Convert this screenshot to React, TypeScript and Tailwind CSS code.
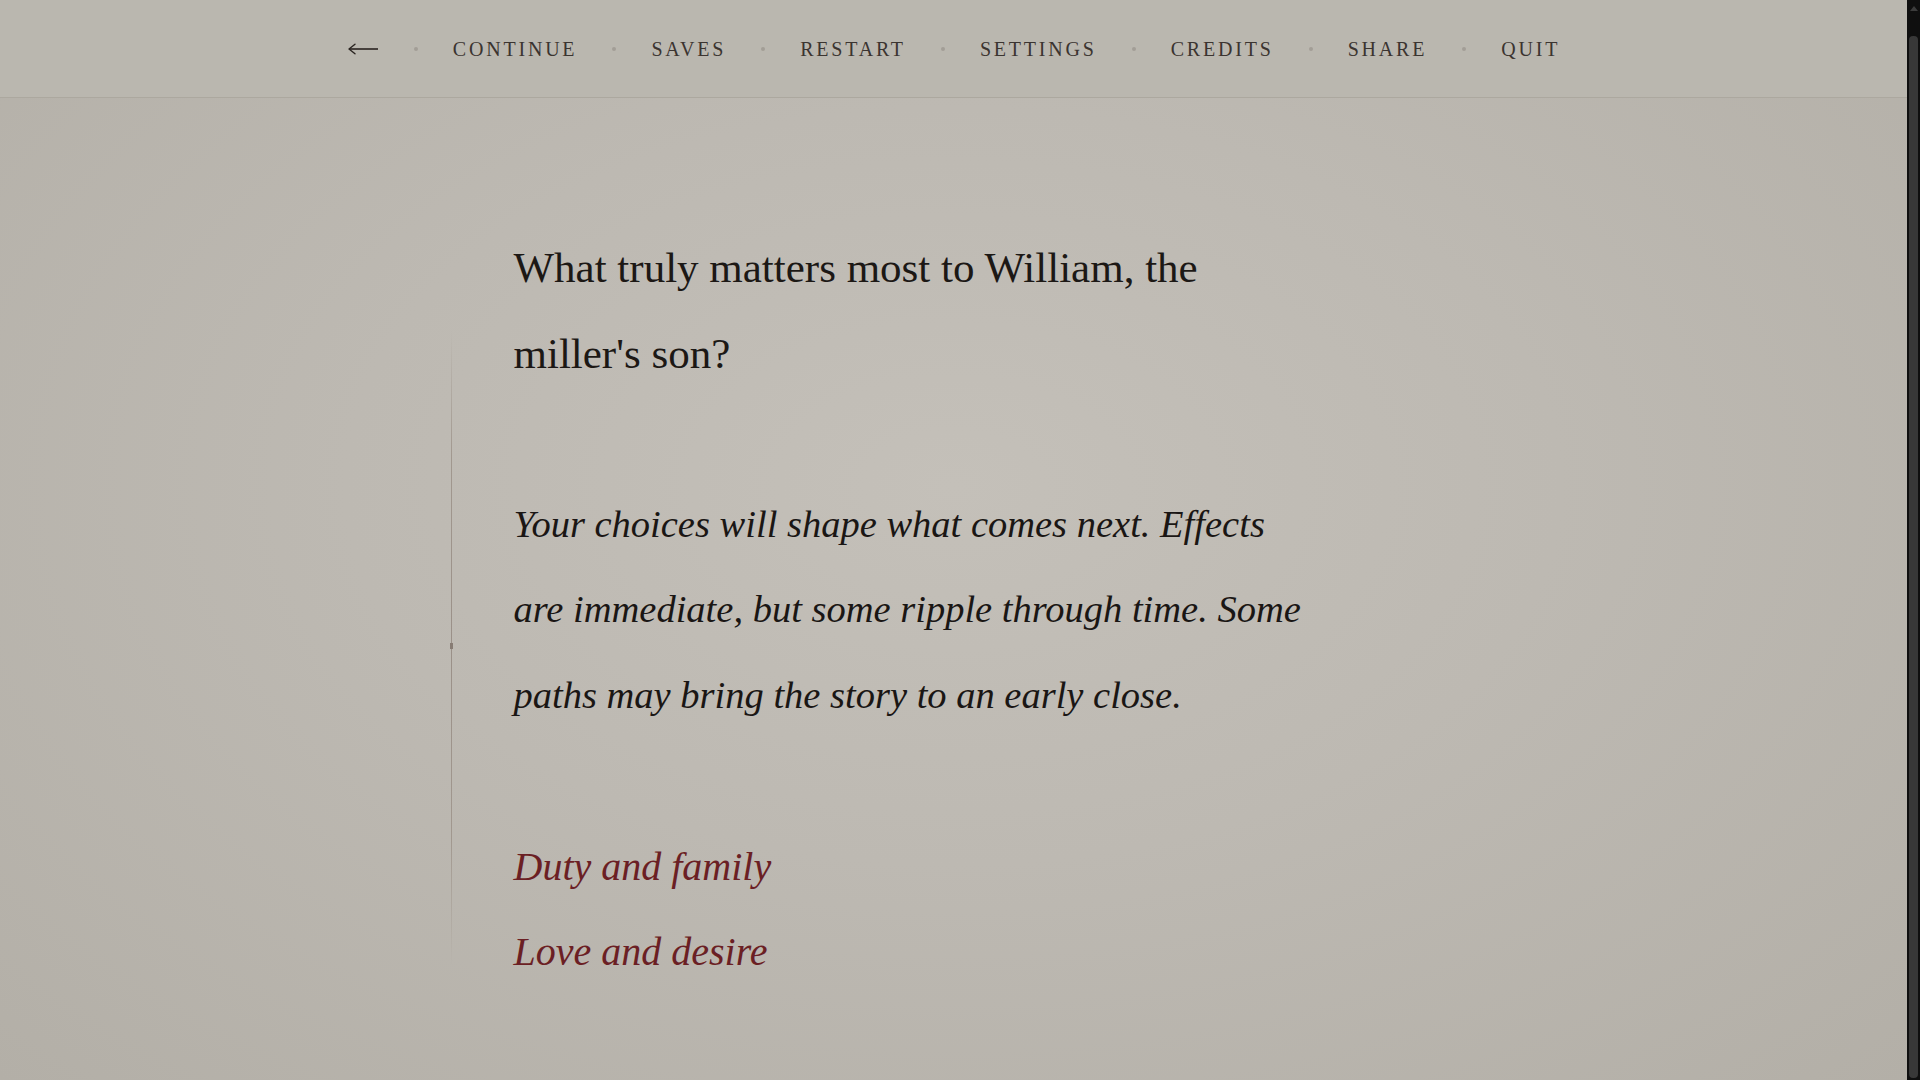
/* ──────────────────────────────────────────────────────────
   Story page — top menu, question, choices
   ────────────────────────────────────────────────────────── */

const MENU = ['Continue', 'Saves', 'Restart', 'Settings', 'Credits', 'Share', 'Quit'];

function Dot() {
  return <span className="block w-[4px] h-[4px] rounded-full bg-[#a29e96]" />;
}

function BackArrow() {
  return (
    <svg width="32" height="12" viewBox="0 0 32 12" fill="none" className="block">
      <path d="M31 6H2" stroke="#2a2420" strokeWidth="1.6" />
      <path d="M8 1.2L2 6l6 4.8" stroke="#2a2420" strokeWidth="1.4" strokeLinecap="round" strokeLinejoin="round" />
    </svg>
  );
}

function TopMenu() {
  return (
    <header className="h-[98px] shrink-0 border-b border-[#aca89f] bg-[#bab7af] flex items-center justify-center gap-[35px]">
      <button className="flex items-center h-6">
        <BackArrow />
      </button>
      {MENU.map((label) => (
        <div key={label} className="flex items-center gap-[35px]">
          <Dot />
          <button className="font-['Liberation_Serif',serif] text-[20px] uppercase tracking-[0.14em] text-[#3b3430] leading-none">
            {label}
          </button>
        </div>
      ))}
    </header>
  );
}

function Scrollbar() {
  return (
    <aside className="w-[13px] shrink-0 bg-[#0f0f0f] flex flex-col items-center">
      <div className="h-[36px] flex items-start pt-[6px]">
        <span className="block w-0 h-0 border-l-[4px] border-r-[4px] border-b-[5px] border-l-transparent border-r-transparent border-b-[#3c3c3c]" />
      </div>
      <div className="flex-1 w-[9px] rounded-[4px] bg-[#383838] mb-[2px]" />
    </aside>
  );
}

export default function App() {
  return (
    <div className="flex w-full h-[1080px] overflow-hidden">
      <main className="flex-1 flex flex-col bg-[radial-gradient(ellipse_at_50%_45%,#c4c0b9_0%,#bdb9b2_45%,#b3afa7_100%)]">
        <TopMenu />

        <section className="mx-auto w-[1006px] flex items-start pt-[127px]">
          {/* decorative rule */}
          <div className="relative mt-[105px] h-[637px] w-px bg-[linear-gradient(to_bottom,transparent,#a1988f_20%,#9a9088_50%,#a1988f_80%,transparent)]">
            <span className="absolute left-[-1px] top-[313px] w-[3px] h-[6px] bg-[#877c74]" />
          </div>

          <div className="ml-[62px] leading-[85.5px] whitespace-nowrap">
            <p className="font-['Liberation_Serif',serif] text-[43px] text-[#1c1815]">
              What truly matters most to William, the
              <br />
              miller's son?
            </p>

            <p className="mt-[85.5px] font-['Liberation_Serif',serif] italic text-[38.5px] text-[#1a1614]">
              Your choices will shape what comes next. Effects
              <br />
              are immediate, but some ripple through time. Some
              <br />
              paths may bring the story to an early close.
            </p>

            <div className="mt-[85.5px] flex flex-col font-['Liberation_Serif',serif] italic text-[40px] text-[#6b1f24]">
              <button className="text-left leading-[85.5px]">Duty and family</button>
              <button className="text-left leading-[85.5px]">Love and desire</button>
            </div>
          </div>
        </section>
      </main>
      <Scrollbar />
    </div>
  );
}
